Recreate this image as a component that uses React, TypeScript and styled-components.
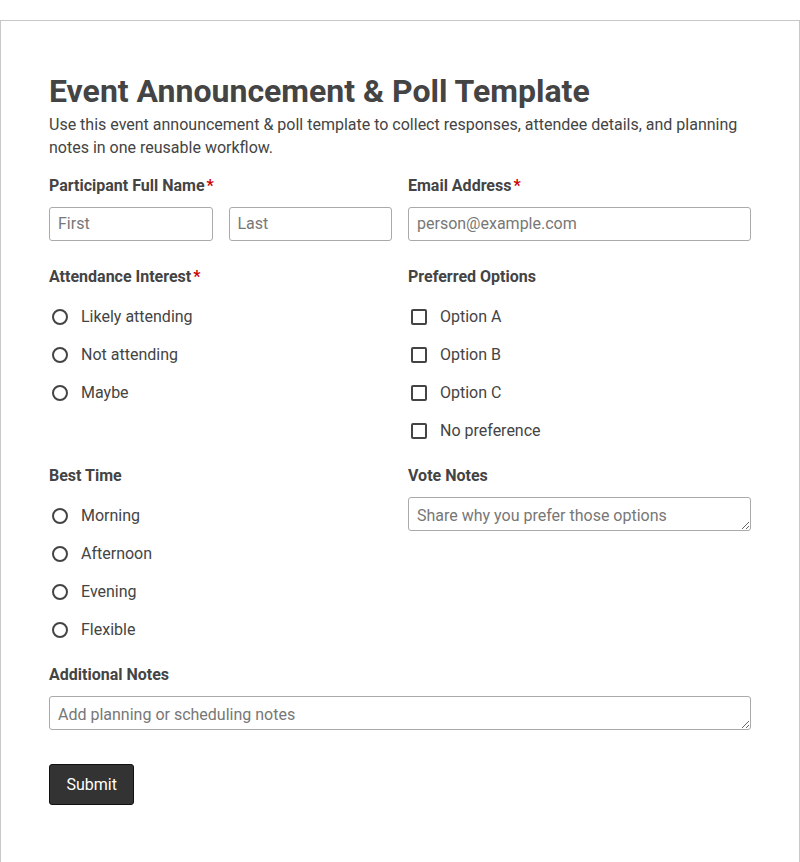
import styled, { createGlobalStyle } from "styled-components";

const GlobalStyle = createGlobalStyle`
  * { box-sizing: border-box; }
  body {
    margin: 0;
    font-family: Roboto, "Liberation Sans", Arial, sans-serif;
    color: #444;
    background: #fff;
  }
`

const Page = styled.div`
  margin-top: 20px;
  border: 1px solid #c8c8c8;
  border-bottom: none;
  padding: 49px 48px 56px;
  min-height: 842px;
`

const Title = styled.h1`
  margin: 0;
  font-size: 32px;
  line-height: 43px;
  font-weight: 700;
  color: #444;
`

const Intro = styled.p`
  margin: 0 0 17px;
  font-size: 16px;
  line-height: 23px;
  color: #444;
`

const FieldGrid = styled.div`
  display: grid;
  grid-template-columns: 1fr 1fr;
  column-gap: 16px;
  row-gap: 26px;
`

const Field = styled.div<{ $wide?: boolean }>`
  display: flex;
  flex-direction: column;
  grid-column: ${p => (p.$wide ? "1 / -1" : "auto")};
`

const Label = styled.label`
  font-size: 16px;
  line-height: 19px;
  font-weight: 700;
  margin-bottom: 12px;
`

const Required = styled.span`
  color: #c00;
  margin-left: 2px;
`

const Pair = styled.div`
  display: grid;
  grid-template-columns: 1fr 1fr;
  gap: 16px;
`

const TextInput = styled.input`
  height: 34px;
  width: 100%;
  border: 1px solid #aaa;
  border-radius: 3px;
  padding: 0 8px 2px;
  font-family: inherit;
  font-size: 16px;
  color: #444;
  &::placeholder { color: #777; }
`

const TextArea = styled.textarea`
  display: block;
  height: 34px;
  width: 100%;
  border: 1px solid #aaa;
  border-radius: 3px;
  padding: 8px 8px 4px;
  font-family: inherit;
  font-size: 16px;
  line-height: 20px;
  color: #444;
  resize: vertical;
  &::placeholder { color: #777; }
`

const OptionList = styled.div`
  display: flex;
  flex-direction: column;
  gap: 16px;
  padding-top: 8px;
  margin-bottom: -2px;
`

const Option = styled.label`
  display: flex;
  align-items: center;
  font-size: 16px;
  line-height: 22px;
  color: #444;
  cursor: pointer;
`

const Choice = styled.input<{ $round?: boolean }>`
  appearance: none;
  margin: 0 13px 0 3px;
  width: 16px;
  height: 16px;
  border: 2px solid #444;
  border-radius: ${p => (p.$round ? "50%" : "2px")};
  background: #fff;
  flex-shrink: 0;
  &:checked {
    background: ${p => (p.$round ? "radial-gradient(circle, #444 0 3px, #fff 4px)" : "#444")};
  }
`

const SubmitButton = styled.button`
  margin-top: 34px;
  background: #333;
  color: #fff;
  border: 1px solid #111;
  border-radius: 3px;
  padding: 10px 16.5px;
  font-family: inherit;
  font-size: 16px;
  line-height: 19px;
  cursor: pointer;
`

type ChoiceGroupProps = {
  name: string
  options: string[]
  multiple?: boolean
}

function ChoiceGroup({ name, options, multiple = false }: ChoiceGroupProps) {
  return (
    <OptionList>
      {options.map(opt => (
        <Option key={opt}>
          <Choice type={multiple ? "checkbox" : "radio"} name={name} value={opt} $round={!multiple} />
          {opt}
        </Option>
      ))}
    </OptionList>
  )
}

export default function App() {
  return (
    <>
      <GlobalStyle />
      <Page>
        <Title>Event Announcement &amp; Poll Template</Title>
        <Intro>
          Use this event announcement &amp; poll template to collect responses, attendee details, and planning notes in one reusable workflow.
        </Intro>
        <form onSubmit={e => e.preventDefault()}>
          <FieldGrid>
            <Field>
              <Label>Participant Full Name<Required>*</Required></Label>
              <Pair>
                <TextInput placeholder="First" />
                <TextInput placeholder="Last" />
              </Pair>
            </Field>
            <Field>
              <Label>Email Address<Required>*</Required></Label>
              <TextInput type="email" placeholder="person@example.com" />
            </Field>
            <Field>
              <Label>Attendance Interest<Required>*</Required></Label>
              <ChoiceGroup name="attendance" options={["Likely attending", "Not attending", "Maybe"]} />
            </Field>
            <Field>
              <Label>Preferred Options</Label>
              <ChoiceGroup name="preferred" multiple options={["Option A", "Option B", "Option C", "No preference"]} />
            </Field>
            <Field>
              <Label>Best Time</Label>
              <ChoiceGroup name="time" options={["Morning", "Afternoon", "Evening", "Flexible"]} />
            </Field>
            <Field>
              <Label>Vote Notes</Label>
              <TextArea placeholder="Share why you prefer those options" />
            </Field>
            <Field $wide>
              <Label>Additional Notes</Label>
              <TextArea placeholder="Add planning or scheduling notes" />
            </Field>
          </FieldGrid>
          <SubmitButton type="submit">Submit</SubmitButton>
        </form>
      </Page>
    </>
  )
}
